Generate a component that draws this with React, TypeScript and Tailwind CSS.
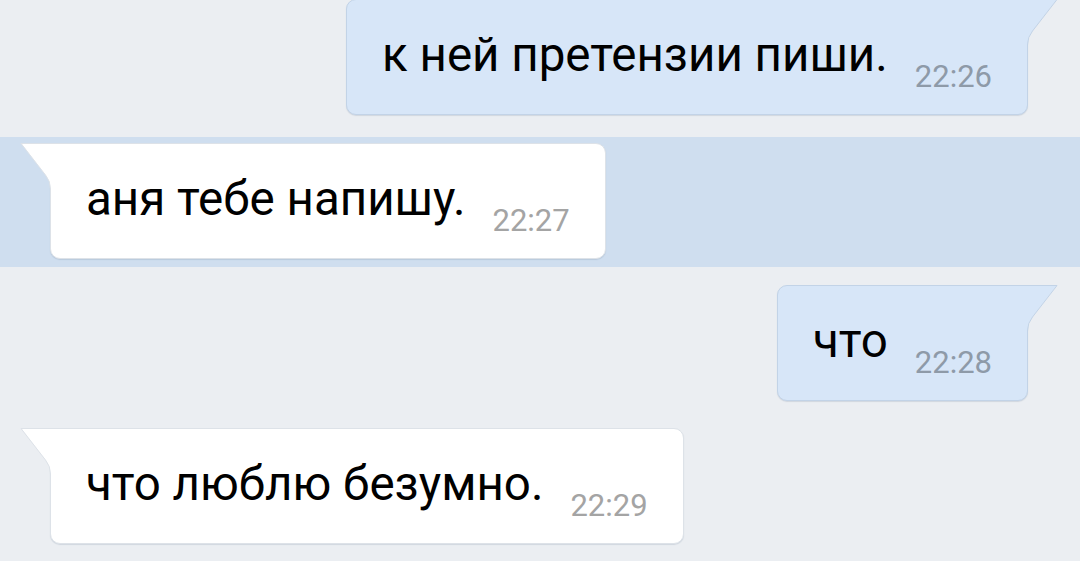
import React from "react";

type Msg = { text: string; time: string; out: boolean; marked?: boolean };

const messages: Msg[] = [
  { text: "к ней претензии пиши.", time: "22:26", out: true },
  { text: "аня тебе напишу.", time: "22:27", out: false, marked: true },
  { text: "что", time: "22:28", out: true },
  { text: "что люблю безумно.", time: "22:29", out: false },
];

function Tail({ out }: { out: boolean }) {
  const fill = out ? "#d7e6f8" : "#ffffff";
  const stroke = out ? "#c2d3e7" : "#dde2e8";
  return (
    <svg
      width="31"
      height="46"
      viewBox="0 0 31 46"
      className={
        out
          ? "absolute left-full top-[-1px]"
          : "absolute right-full top-[-1px] -scale-x-100"
      }
    >
      <path d="M0 0 H30 L5.5 32 Q0.5 38 0.5 46 H0 Z" fill={fill} />
      <path
        d="M0 0.5 H30 L5.5 32 Q0.5 38 0.5 46"
        fill="none"
        stroke={stroke}
        strokeWidth="1"
      />
    </svg>
  );
}

function Bubble({ m }: { m: Msg }) {
  return (
    <div
      className={
        m.out
          ? "relative flex h-[116px] items-end rounded-[10px] rounded-tr-none border border-[#c2d3e7] bg-[#d7e6f8] px-[35px] pb-[22px] shadow-[0_1px_1px_rgba(90,110,140,0.18)]"
          : "relative flex h-[116px] items-end rounded-[10px] rounded-tl-none border border-[#dde2e8] bg-white px-[35px] pb-[22px] shadow-[0_1px_1px_rgba(90,110,140,0.18)]"
      }
    >
      <Tail out={m.out} />
      <span className="mb-[13px] text-[47.5px] leading-none text-black">{m.text}</span>
      <span
        className={
          m.out
            ? "ml-[27px] text-[31px] leading-none text-[#8e9aa8]"
            : "ml-[27px] text-[31px] leading-none text-[#a4a4a4]"
        }
      >
        {m.time}
      </span>
    </div>
  );
}

function Row({ m, className }: { m: Msg; className?: string }) {
  return (
    <div
      className={
        (m.out ? "flex justify-end pr-[52px] " : "flex justify-start pl-[50px] ") +
        (className ?? "")
      }
    >
      <Bubble m={m} />
    </div>
  );
}

export default function App() {
  return (
    <div
      className="h-[561px] overflow-hidden bg-[#ebeef2]"
      style={{ fontFamily: "Roboto, 'Noto Sans', sans-serif" }}
    >
      <div className="-mt-px flex flex-col">
        <Row m={messages[0]} />
        <Row m={messages[1]} className="mt-[22px] bg-[#cfdeef] pt-[6px] pb-[8px]" />
        <Row m={messages[2]} className="mt-[18px]" />
        <Row m={messages[3]} className="mt-[27px]" />
      </div>
    </div>
  );
}
